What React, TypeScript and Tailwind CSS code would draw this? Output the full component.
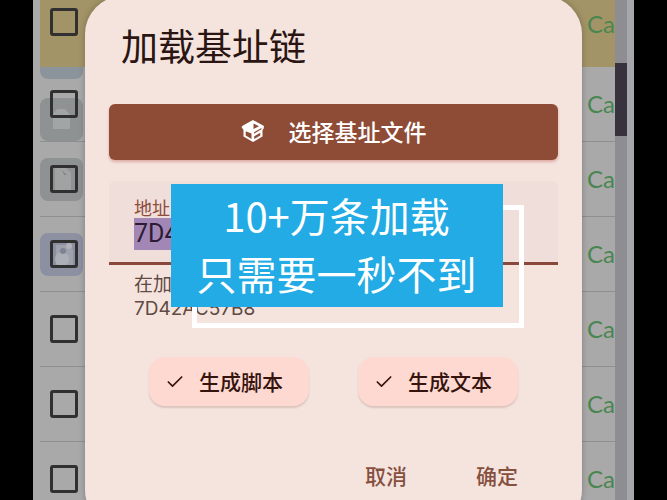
import { useState } from 'react';
import { Check } from 'lucide-react';

type Tile = 'file' | 'page' | 'media';

const rows: { id: number; tile?: Tile }[] = [
  { id: 1, tile: 'file' },
  { id: 2, tile: 'page' },
  { id: 3, tile: 'media' },
  { id: 4 },
  { id: 5 },
  { id: 6 },
];

const checkboxStyle = 'block size-7 appearance-none rounded-[3px] border-3 border-[#303030] checked:bg-[#303030]';
const typeStyle = "font-['Lato',sans-serif] text-[24px] leading-8 text-[#4a8650]";

function FileTile({ kind }: { kind: Tile }) {
  if (kind === 'media') {
    return (
      <svg viewBox="0 0 43 43" className="size-[43px] rounded-lg bg-[#8c90a1]">
        <path d="M16 12h12l5 5v17H16z" fill="#9fa2ad" />
        <circle cx="22" cy="26" r="7" fill="#adafb6" />
        <circle cx="23" cy="18" r="3" fill="#7d8296" />
        <circle cx="29" cy="13" r="3" fill="#b1b3b9" />
      </svg>
    );
  }
  return (
    <svg viewBox="0 0 43 43" className="size-[43px] rounded-lg bg-[#8e9293]">
      {kind === 'file' ? (
        <path d="M13 16l4-5h8l5 6v14H13z" fill="#a2a5a6" />
      ) : (
        <>
          <path d="M15 9h10l6 6v18H15z" fill="#a1a3a3" />
          <path d="M22 12l5 5h-3z" fill="#858888" />
        </>
      )}
    </svg>
  );
}

function BoxIcon() {
  return (
    <svg viewBox="0 0 24 24" className="size-6" fill="currentColor" fillRule="evenodd">
      <path d="M12 1l11 6-.5 3-1 1v6.500L12 23l-9.500-5.500V11L.5 8 2 6.500zM12.500 4.500V10L18 7.200zM4.700 12.300v4.200l5.800 3.500v-5.500zM13 13.300v1.500l7.500-4.500V9zM13.200 17.300v2.800l6.100-3.600v-2.800z" />
    </svg>
  );
}

function ToggleChip({ label }: { label: string }) {
  const [on, setOn] = useState(true);
  return (
    <label className="flex h-[49px] cursor-pointer items-center gap-3.5 rounded-2xl bg-[#fed9d1] pl-4 pr-[26px] text-[21px] font-medium text-[#35140d] shadow-[0_2px_2px_rgba(120,70,60,0.2)]">
      <span className="grid place-items-center">
        <input
          type="checkbox"
          checked={on}
          onChange={(e) => setOn(e.target.checked)}
          className="col-start-1 row-start-1 size-5 appearance-none"
        />
        {on && <Check size={20} strokeWidth={2} className="pointer-events-none col-start-1 row-start-1" />}
      </span>
      {label}
    </label>
  );
}

function AddressList() {
  return (
    <div className="flex h-full pl-[7px]">
      <div className="min-w-0 flex-1">
        <div className="flex h-[67px] items-start justify-between bg-[#a39467] pl-2.5 pt-2">
          <input type="checkbox" aria-label="Select all" className={checkboxStyle} />
          <span className={typeStyle}>Ca</span>
        </div>
        {rows.map((row) => (
          <div key={row.id} className="grid h-[75px] border-b border-[#8f8f8f]">
            {row.id === 1 && <div className="col-start-1 row-start-1 h-3 w-[43px] rounded-b-lg bg-[#8b949b]" />}
            {row.tile && (
              <div className={'col-start-1 row-start-1 ' + (row.id === 1 ? 'self-end' : 'self-center')}>
                <FileTile kind={row.tile} />
              </div>
            )}
            <div className="col-start-1 row-start-1 flex items-center justify-between pl-2.5">
              <input type="checkbox" aria-label={'Select row ' + row.id} className={checkboxStyle} />
              <span className={typeStyle}>Ca</span>
            </div>
          </div>
        ))}
      </div>
      <div className="w-3 bg-[#8e8e92] pt-[63px]">
        <div className="h-[73px] bg-[#37323e]" />
      </div>
      <div className="w-[7px] bg-[#a6a7aa]" />
    </div>
  );
}

function LoadDialog() {
  const [address, setAddress] = useState('7D42AC57B8');

  return (
    <div
      role="dialog"
      aria-labelledby="dialog-title"
      className="-mt-1 flex flex-1 flex-col rounded-[38px] bg-[#f5e4de] px-6 shadow-[0_0_6px_rgba(0,0,0,0.25)]"
    >
      <h1 id="dialog-title" className="px-3 pt-[23px] text-[37px] leading-[52px] text-[#2a1512]">
        加载基址链
      </h1>

      <button className="mt-[33px] flex h-14 items-center justify-center gap-6 rounded-md bg-[#8e4c37] pb-0.5 text-[23px] font-medium text-white shadow-[0_2px_3px_rgba(190,90,80,0.4)]">
        <BoxIcon />
        选择基址文件
      </button>

      <div className="mt-[21px] rounded-t-md border-b-3 border-[#8a473b] bg-[#efdeda] px-[25px] pb-3 pt-4">
        <label htmlFor="address" className="block pb-px text-[18px] leading-5 text-[#8e4c3c]">
          地址
        </label>
        <input
          id="address"
          value={address}
          onChange={(e) => setAddress(e.target.value)}
          className="block h-8 w-36 bg-[#a287b6] font-[Roboto] text-[25px] text-[#2c1b33] outline-none"
        />
      </div>
      <p className="px-[25px] pt-2 font-[Inter,'Noto_Sans_CJK_SC',sans-serif] text-[19px] leading-6 text-[#5f4a44]">
        在加载
        <br />
        7D42AC57B8
      </p>

      <div className="mt-9 flex justify-between px-10">
        <ToggleChip label="生成脚本" />
        <ToggleChip label="生成文本" />
      </div>

      <div className="mt-12 flex justify-end gap-[69px] px-10 text-[21px] font-medium text-[#86503f]">
        <button className="h-11">取消</button>
        <button className="h-11">确定</button>
      </div>
    </div>
  );
}

function Banner() {
  return (
    <div className="relative bg-[#22abe4] px-[26px] pb-[5px] pt-0.5 text-center text-[40px] leading-[58px] text-white">
      <div className="absolute -bottom-[21px] -right-[21px] left-[21px] top-[21px] -z-10 border-[5px] border-white" />
      10+万条加载
      <br />
      只需要一秒不到
    </div>
  );
}

export default function App() {
  return (
    <div className="h-screen overflow-hidden bg-black px-[33px] font-['Noto_Sans_CJK_SC',sans-serif]">
      <div className="relative h-full overflow-hidden bg-[#a9a9a9]">
        <AddressList />
        <div className="absolute inset-x-[52px] -bottom-7 top-0 flex items-stretch">
          <LoadDialog />
        </div>
        <div className="absolute inset-x-0 top-[184px] isolate flex justify-center pl-1.5">
          <Banner />
        </div>
      </div>
    </div>
  );
}
